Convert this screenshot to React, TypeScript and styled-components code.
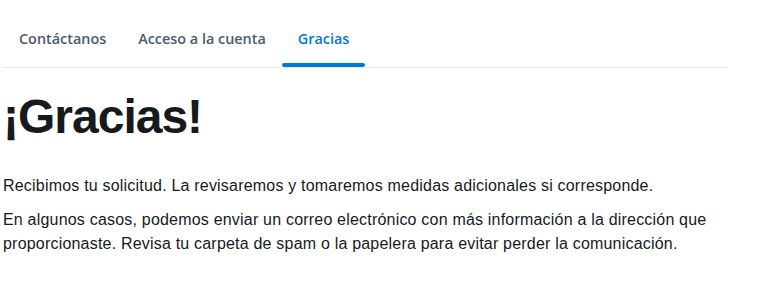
import React from 'react';
import styled, { createGlobalStyle } from 'styled-components';

const GlobalStyle = createGlobalStyle`
  body {
    margin: 0;
    background: #ffffff;
  }
`;

const Page = styled.div`
  padding: 20px 3px 0;
  width: 724px;
`;

const TabList = styled.div`
  display: flex;
  border-bottom: 1px solid #e6e9ec;
`;

const Tab = styled.div<{ $active?: boolean }>`
  position: relative;
  padding: 10px 16px 20px;
  font-family: "Open Sans", "Noto Sans", sans-serif;
  font-size: 14.4px;
  font-weight: 600;
  line-height: 17px;
  color: ${(p) => (p.$active ? '#0078d4' : '#4c5a69')};
  cursor: pointer;

  &::after {
    content: '';
    display: ${(p) => (p.$active ? 'block' : 'none')};
    position: absolute;
    left: 0;
    right: 0;
    bottom: 0;
    height: 4px;
    border-radius: 2px;
    background: #0078d4;
  }
`;

const Title = styled.h1`
  margin: 21px 0 0;
  font-family: "Liberation Sans", Arial, sans-serif;
  font-size: 48px;
  font-weight: 700;
  line-height: 56px;
  letter-spacing: -1px;
  color: #161a1d;
`;

const Text = styled.p`
  margin: 0;
  font-family: "Liberation Sans", Arial, sans-serif;
  font-size: 16px;
  letter-spacing: 0.2px;
  line-height: 24px;
  color: #161a1d;

  & + & {
    margin-top: 10px;
  }
`;

const Body = styled.div`
  margin-top: 29px;
`;

const tabs = ['Contáctanos', 'Acceso a la cuenta', 'Gracias'];

export default function App() {
  return (
    <Page>
      <GlobalStyle />
      <TabList>
        {tabs.map((t) => (
          <Tab key={t} $active={t === 'Gracias'}>
            {t}
          </Tab>
        ))}
      </TabList>
      <Title>¡Gracias!</Title>
      <Body>
        <Text>
          Recibimos tu solicitud. La revisaremos y tomaremos medidas adicionales si corresponde.
        </Text>
        <Text>
          En algunos casos, podemos enviar un correo electrónico con más información a la dirección que
          proporcionaste. Revisa tu carpeta de spam o la papelera para evitar perder la comunicación.
        </Text>
      </Body>
    </Page>
  );
}
